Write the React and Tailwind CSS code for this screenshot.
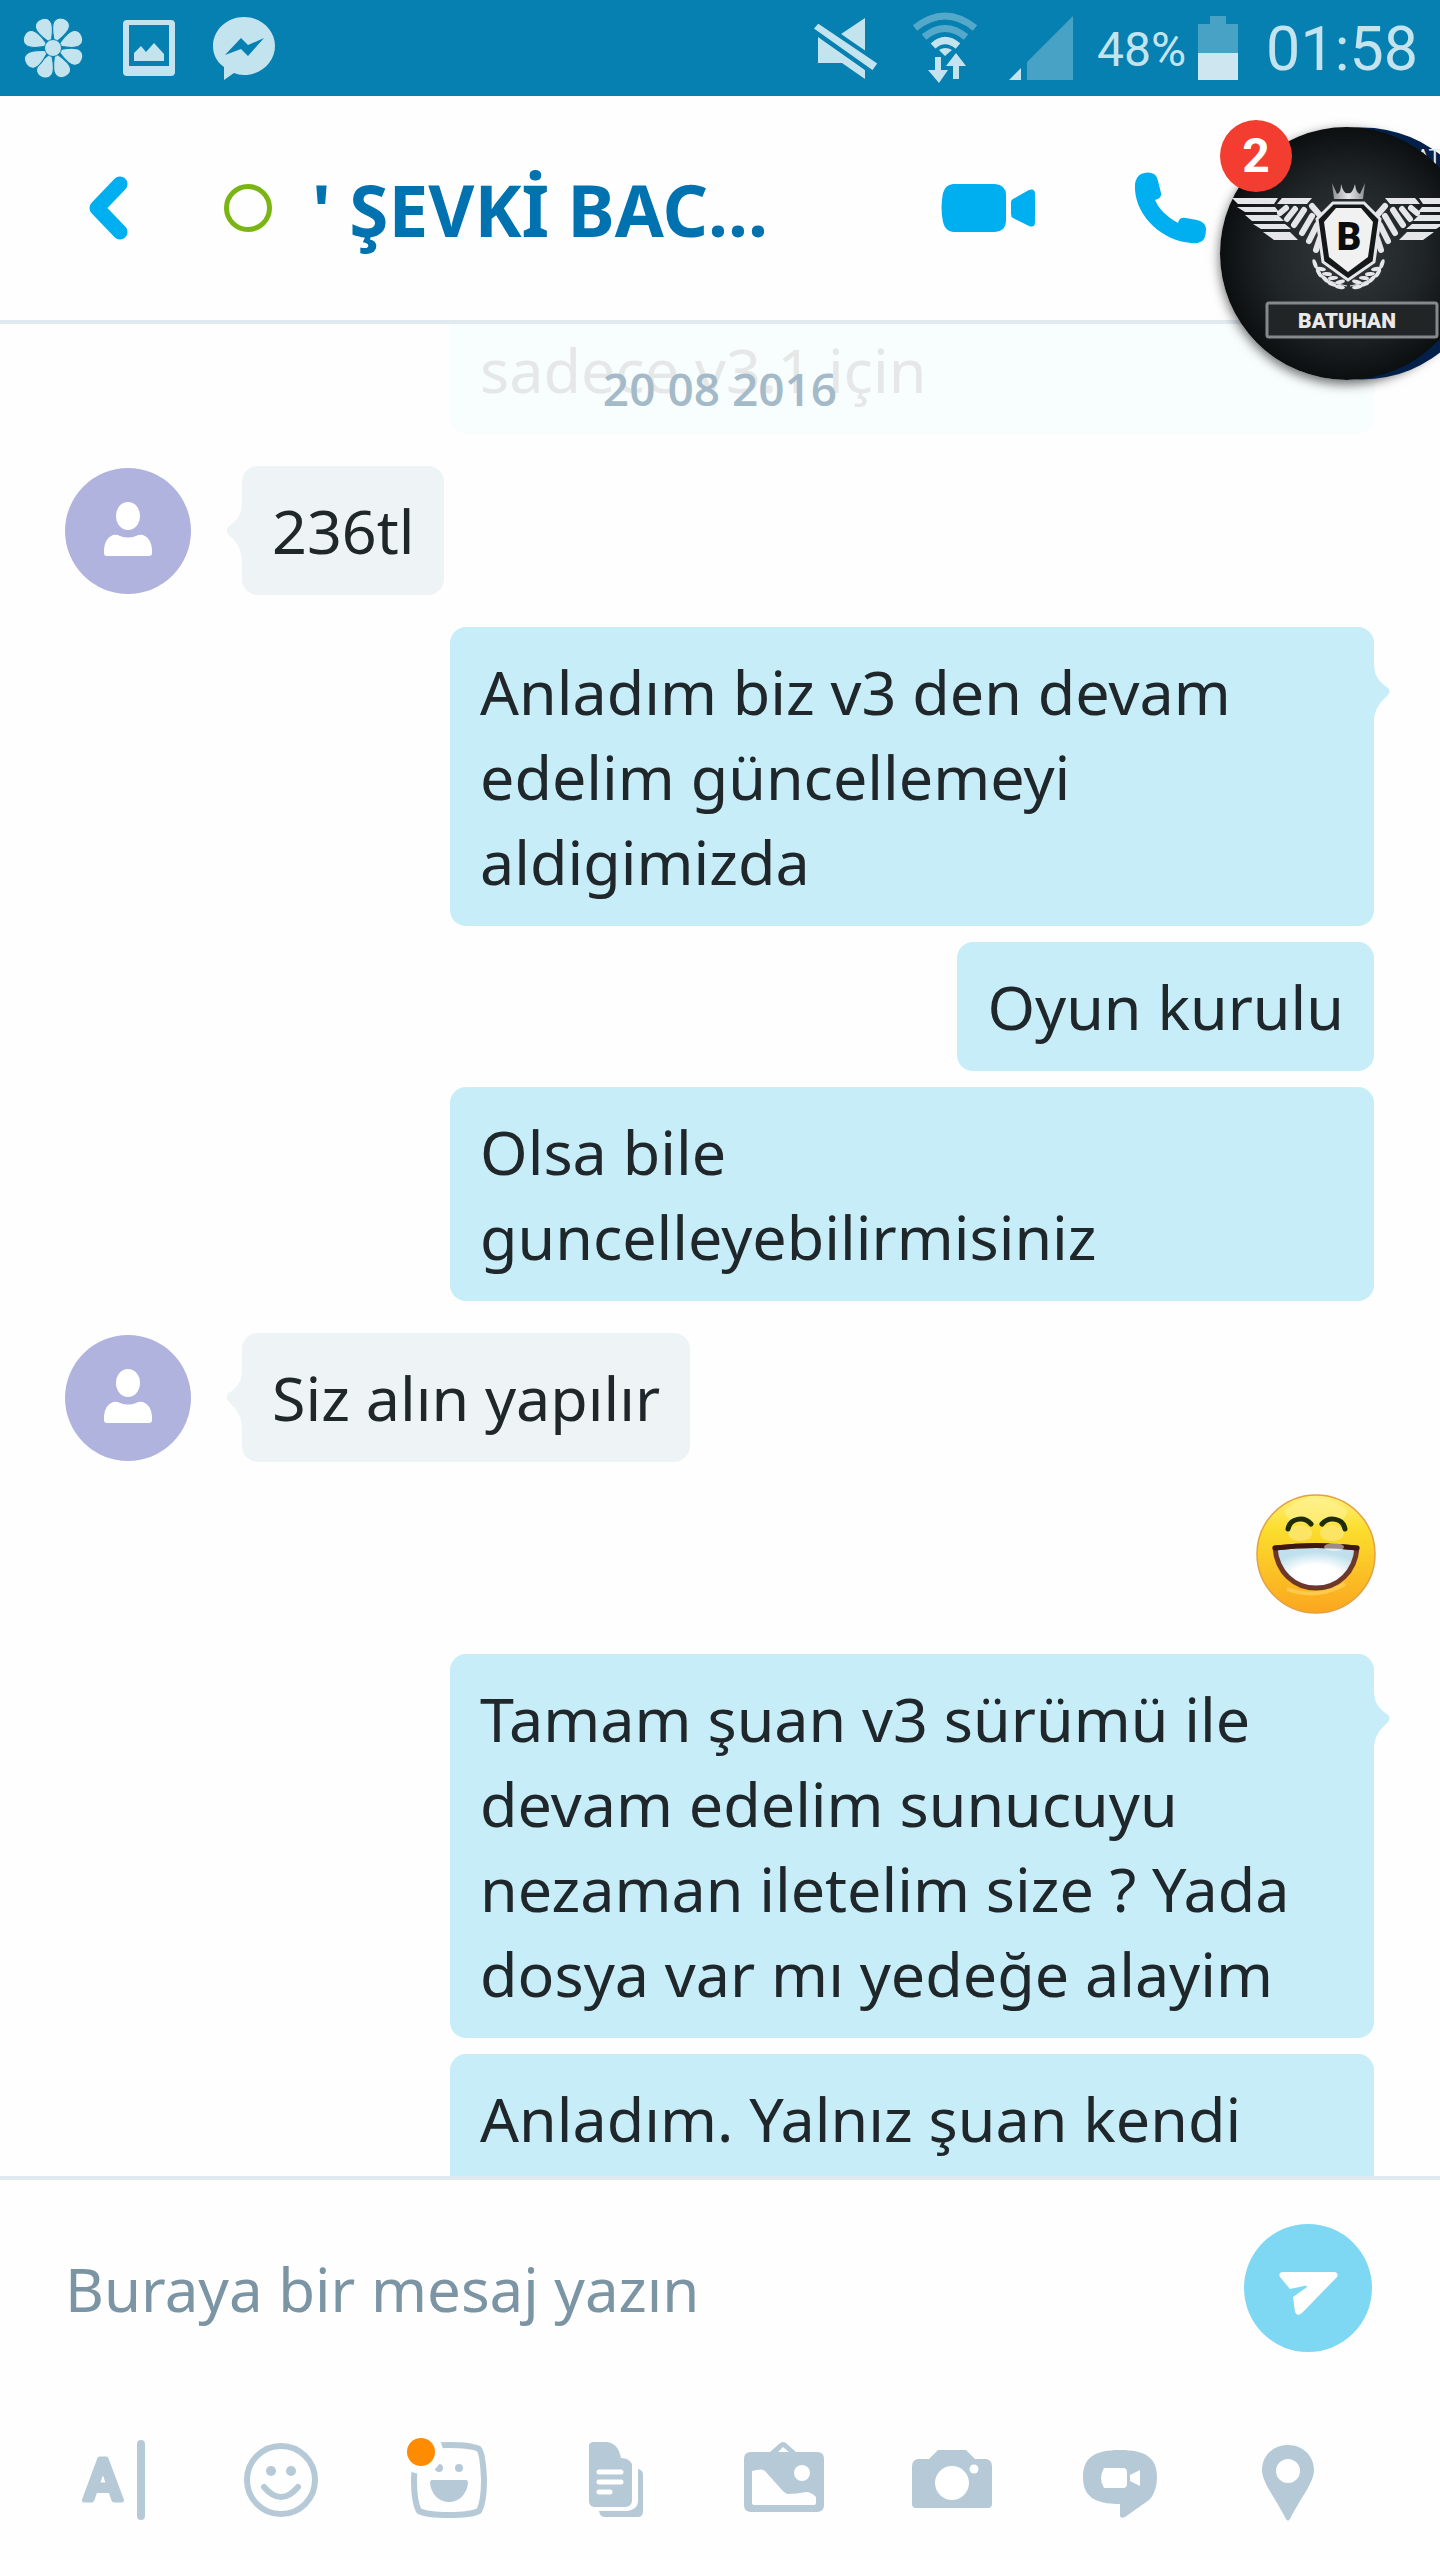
import { useState } from 'react';

// Messages of the conversation, grouped by who sent them
const conversation = [
    { from: 'contact', texts: ['236tl'] },
    { from: 'me', texts: ['Anladım biz v3 den devam edelim güncellemeyi aldigimizda', 'Oyun kurulu', 'Olsa bile guncelleyebilirmisiniz'] },
    { from: 'contact', texts: ['Siz alın yapılır'] },
    { from: 'me', emoji: true },
    { from: 'me', texts: ['Tamam şuan v3 sürümü ile devam edelim sunucuyu nezaman iletelim size ? Yada dosya var mı yedeğe alayim'] },
];

const petals = [20, 67, 112, 157, 200, 240, 293, 337];

function StatusBar() {
    return (
        <div className="flex h-24 shrink-0 items-center bg-[#0580b1] pl-[23px] pr-[22px] font-[Roboto,sans-serif] text-[#c3e3ee]">
            {/* Flower */}
            <svg className="h-16 w-[60px]" viewBox="0 0 60 64" fill="currentColor" stroke="#0580b1" strokeWidth="1">
                {petals.map((a) => (
                    <path key={a} transform={`rotate(${a} 30 32)`} d="M30 27C26 20 20 12 22 6C24 -1 36 -1 38 6C40 12 34 20 30 27Z" />
                ))}
                <circle cx="30" cy="32" r="8.500" />
            </svg>
            {/* Gallery */}
            <svg className="ml-10 h-14 w-[52px]" viewBox="0 0 52 56" fill="currentColor">
                <path fillRule="evenodd" d="M4 0H48Q52 0 52 4V52Q52 56 48 56H4Q0 56 0 52V4Q0 0 4 0ZM6 5V46H46V5Z" />
                <path d="M11 41V33L18 26L23 32L31 23L41 34V41Z" />
            </svg>
            {/* Messenger */}
            <svg className="ml-[38px] h-16 w-[62px]" viewBox="0 0 62 64">
                <path fill="currentColor" d="M31 1C48 1 62 14 62 30S48 59 31 59C27 59 24 58 21 57L11 64V51C4 46 0 39 0 30C0 14 14 1 31 1Z" />
                <path fill="#0580b1" d="M12 39L28 22L35 29L51 22L35 40L28 33Z" />
            </svg>

            {/* Muted speaker */}
            <svg className="ml-auto h-16 w-[66px]" viewBox="0 0 66 64" fill="currentColor">
                <path d="M53 2V36L29 18ZM6 21V47H30L53 63V54Z" />
                <path stroke="#0580b1" strokeWidth="4" d="M6 5L68 47L61 57L-1 13Z" />
            </svg>
            {/* Wifi */}
            <svg className="ml-[34px] h-[72px] w-[66px]" viewBox="0 0 66 72" fill="none" stroke="currentColor" strokeWidth="7">
                <path opacity=".42" d="M3 16Q33 -8 63 16M12 25Q33 8 54 25" />
                <path d="M21 34Q33 23 46 34" />
                <path fill="currentColor" stroke="none" d="M27 38Q33 34 40 38L33 44ZM23 45H29V58H36L27 71L16 58H23ZM41 67V54H34L44 41L54 54H47V67Z" />
            </svg>
            {/* Signal */}
            <svg className="ml-[31px] h-16 w-16" viewBox="0 0 64 64" fill="currentColor">
                <path d="M0 64L12 52V64Z" />
                <path opacity=".35" d="M18 64V46L64 0V64Z" />
            </svg>
            <span className="ml-6 pt-1 text-[48px]">48%</span>
            {/* Battery */}
            <svg className="ml-3 h-16 w-10" viewBox="0 0 40 64" fill="currentColor">
                <path opacity=".35" d="M12 0H28V8H40V37H0V8H12Z" />
                <path d="M0 37H40V64H0Z" fill="#cde6f0" />
            </svg>
            <span className="ml-7 pt-1 text-[61px]">01:58</span>
        </div>
    );
}

function Wing() {
    return (
        <g fill="#e4e6e7">
            <path d="M12 71H58L54 77H18ZM17 80H55L59 85H25ZM25 88H58L64 94H32ZM33 97H65L71 102H41ZM43 105H70L78 113H54Z" />
            <path d="M62 71H92L87 77H57Z" />
            <path fill="none" stroke="#e4e6e7" strokeWidth="6" strokeLinecap="round" d="M66 81L60 86M75 82L67 92M84 83L74 98M92 89L82 106M97 98L89 114M100 111L96 123M92 79L104 93" />
        </g>
    );
}

function Laurel() {
    return (
        <g fill="#e4e6e7">
            <path d="M94 134Q98 154 127 159" fill="none" stroke="#e4e6e7" strokeWidth="1" />
            {[[95, 137, 70], [101, 142, 10], [99, 146, 60], [107, 147, 5], [105, 152, 45], [113, 151, -5], [112, 157, 25], [120, 155, -15], [120, 160, 10]].map(([x, y, a]) => (
                <ellipse key={`${x}-${y}`} cx={x} cy={y} rx="5" ry="2" transform={`rotate(${a} ${x} ${y})`} />
            ))}
        </g>
    );
}

// Two stacked chat heads, the front one covers most of the navy one behind
function ChatHead() {
    return (
        <button aria-label="Batuhan" className="absolute -right-[33px] top-[127px] size-[253px] rounded-full shadow-[0_4px_12px_rgba(0,0,0,0.6)]">
            <svg className="size-full overflow-visible" viewBox="0 0 253 253">
                <defs>
                    <radialGradient id="leather" cx=".5" cy=".5" r=".5">
                        <stop offset="0" stopColor="#34393b" />
                        <stop offset=".6" stopColor="#202527" />
                        <stop offset="1" stopColor="#0c0f10" />
                    </radialGradient>
                    <linearGradient id="crown" x1="0" x2="1">
                        <stop offset="0" stopColor="#8c8f91" />
                        <stop offset=".5" stopColor="#e8e9ea" />
                        <stop offset="1" stopColor="#8c8f91" />
                    </linearGradient>
                </defs>
                <circle cx="142" cy="126.500" r="126" fill="#02204a" />
                <text x="196" y="37" fill="#e5e9ee" fontSize="21" fontFamily="Roboto, sans-serif">AT</text>
                <circle cx="126.500" cy="126.500" r="126.500" fill="url(#leather)" />
                <path fill="url(#crown)" d="M112 56L117 67Q121 66 121 57Q124 68 128 66Q132 68 135 57Q136 66 140 67L145 56L143 72H114Z" />
                <Wing />
                <g transform="translate(257 0) scale(-1 1)"><Wing /></g>
                <path d="M113 76H144L160 92L154 135L128 153L103 135L97 92Z" fill="#151819" stroke="#e4e6e7" strokeWidth="3" />
                <path d="M116 81H141L153 95L148 130L128 145L109 130L104 95Z" fill="#f1f1f1" />
                <text x="129" y="123" textAnchor="middle" fontSize="38" fontWeight="900" fontFamily="Roboto, sans-serif" fill="#0b0c0d">B</text>
                <Laurel />
                <g transform="translate(257 0) scale(-1 1)"><Laurel /></g>
                <rect x="47" y="176" width="170" height="34" rx="2" fill="#222526" stroke="#85898b" strokeWidth="3" />
                <text x="127" y="201" textAnchor="middle" fontSize="21" fontWeight="900" fontFamily="Roboto, sans-serif" fill="#e9e9e9">BATUHAN</text>
            </svg>
            <span className="absolute left-0 -top-[7px] flex size-[72px] items-center justify-center rounded-full bg-[#f33d30] font-[Roboto,sans-serif] text-[48px] font-bold text-white">2</span>
        </button>
    );
}

function Header() {
    return (
        <header className="flex h-[228px] shrink-0 items-center border-b-4 border-[#e1eaf0] pl-[88px] pr-[234px] text-[#00aff0]">
            <button aria-label="Geri">
                <svg className="h-16 w-10" viewBox="0 0 40 64" fill="none" stroke="currentColor" strokeWidth="15" strokeLinecap="round" strokeLinejoin="round">
                    <path d="M32 8L9 32L32 56" />
                </svg>
            </button>
            <span className="ml-24 size-12 rounded-full border-5 border-[#7ab513]"></span>
            <h1 className="ml-10 pt-1 text-[71px] font-bold text-[#0072b0]">' ŞEVKİ BAC...</h1>
            <button aria-label="Görüntülü arama" className="ml-auto">
                <svg className="h-12 w-[94px]" viewBox="0 0 94 48" fill="currentColor">
                    <path d="M12 0H54Q65 1 65 11V37Q65 47 54 48H12Q4 47 2 38Q-1 24 2 9Q4 1 12 0Z" />
                    <path d="M70 18Q70 16 72 15L88 6Q94 4 94 10V38Q94 44 88 42L72 34Q70 33 70 30Z" />
                </svg>
            </button>
            <button aria-label="Sesli arama" className="ml-[100px]">
                <svg className="h-[72px] w-[71px]" viewBox="0 0 71 72" fill="currentColor">
                    <path d="M6 2Q13 -1 19 2Q22 4 23 9L26 21Q27 26 20 28Q25 41 43 51Q44 45 51 46L62 48Q70 50 71 56Q71 63 69 67Q66 72 56 71C26 69 -2 42 0 12Q1 5 6 2Z" />
                </svg>
            </button>
        </header>
    );
}

function Avatar() {
    return (
        <span className="mr-[51px] size-[126px] shrink-0 rounded-full bg-[#b1b3df]">
            <svg viewBox="0 0 126 126" fill="white">
                <ellipse cx="63" cy="48" rx="12" ry="14" />
                <path d="M39 85V81Q40 70 48 67Q52 66 55 68Q63 71 71 68Q74 66 78 67Q86 70 87 81V85Q87 88 84 88H42Q39 88 39 85Z" />
            </svg>
        </span>
    );
}

function Bubble({ text, mine, tail }) {
    return (
        <p className={`relative max-w-[924px] rounded-2xl px-[30px] py-[22px] text-[61px] leading-[85px] text-[#20272b] ${mine ? 'bg-[#c6edf8]' : 'bg-[#eef3f6]'}`}>
            {text}
            {tail && (
                <svg className={`absolute top-9 h-[60px] w-4 ${mine ? 'left-full text-[#c6edf8]' : 'right-full -scale-x-100 text-[#eef3f6]'}`} viewBox="0 0 16 60" fill="currentColor">
                    <path d="M0 0C0 16 8 20 14 25Q17 28 14 32C8 38 0 44 0 60Z" />
                </svg>
            )}
        </p>
    );
}

function Laugh() {
    return (
        <svg role="img" aria-label="gülen yüz" className="-mr-0.5 mb-2 size-[120px]" viewBox="0 0 120 120">
            <defs>
                <linearGradient id="face" x1="0" y1="0" x2="0" y2="1">
                    <stop offset="0" stopColor="#fff07c" />
                    <stop offset=".3" stopColor="#fbdd2c" />
                    <stop offset="1" stopColor="#fba61f" />
                </linearGradient>
                <radialGradient id="teeth" cx=".5" cy=".75" r=".6">
                    <stop offset=".5" stopColor="#ffffff" />
                    <stop offset="1" stopColor="#bfe0ec" />
                </radialGradient>
            </defs>
            <circle cx="60" cy="60" r="59" fill="url(#face)" stroke="#e3a044" strokeWidth="1.500" />
            <path d="M29 16Q60 -8 91 16Q93 30 60 30Q27 30 29 16Z" fill="#fff6a8" opacity=".45" />
            <ellipse cx="44" cy="39" rx="12" ry="8" fill="#fdeb8b" opacity=".6" />
            <ellipse cx="76" cy="39" rx="12" ry="8" fill="#fdeb8b" opacity=".6" />
            <path d="M31 95Q60 106 89 90" fill="none" stroke="#fdd45a" strokeWidth="4" opacity=".7" />
            <path d="M32 35C34 24 48 22 55 30M66 30C73 22 87 24 89 35" fill="none" stroke="#1f2c06" strokeWidth="5" strokeLinecap="round" />
            <path d="M19 54Q60 49 101 54C99 78 82 94 60 94S21 78 19 54Z" fill="url(#teeth)" stroke="#6e3828" strokeWidth="5" strokeLinejoin="round" />
            <path d="M19 54Q60 49 101 54" fill="none" stroke="#3d1710" strokeWidth="5" strokeLinecap="round" />
            <ellipse cx="78" cy="53" rx="10" ry="4" fill="white" opacity=".5" />
        </svg>
    );
}

// Bottom row; every icon sits in the same 96px box
const tools = [
    { label: 'Metin', icon: <>
        <text x="38" y="68" textAnchor="middle" fontSize="57" fontWeight="500" fontFamily="Roboto, sans-serif" stroke="currentColor" strokeWidth="5" strokeLinejoin="round">A</text>
        <rect x="72" y="8" width="8" height="80" rx="4" />
    </> },
    { label: 'İfadeler', icon: <>
        <circle cx="48" cy="48" r="34" fill="none" stroke="currentColor" strokeWidth="6" />
        <circle cx="38" cy="39" r="5" />
        <circle cx="58" cy="39" r="5" />
        <path d="M31 55Q48 75 65 55" fill="none" stroke="currentColor" strokeWidth="6" strokeLinecap="round" />
    </> },
    { label: 'Moji', icon: <>
        <path d="M48 13Q70 13 78 17Q82 22 83 48Q83 70 78 79Q70 83 48 83T18 79Q13 70 13 48Q14 22 18 17Q26 13 48 13Z" fill="none" stroke="currentColor" strokeWidth="6" />
        <circle cx="38" cy="36" r="4" />
        <circle cx="58" cy="36" r="4" />
        <path d="M31 48H65Q67 48 67 51C66 62 58 70 48 70S30 62 29 51Q29 48 31 48Z" />
        <circle cx="20" cy="20" r="22" fill="white" />
        <circle cx="20" cy="20" r="14" fill="#ff8c00" />
    </> },
    { label: 'Dosya', icon: <>
        <path d="M25 10H38Q49 11 52 26Q60 26 63 32V68Q63 74 57 75H25Q20 74 20 69V14Q20 10 25 10Z" />
        <path d="M69 37Q74 38 74 43V79Q74 85 69 85H36Q31 85 30 79H58Q68 78 69 70Z" />
        <path d="M30 40H52M30 50H52M30 60H41" fill="none" stroke="white" strokeWidth="5" strokeLinecap="round" />
    </> },
    { label: 'Galeri', icon: <>
        <path fillRule="evenodd" d="M15 20H34L43 12Q47 8 51 12L60 20H81Q88 20 88 27V73Q88 80 81 80H15Q8 80 8 73V27Q8 20 15 20ZM42 20H53L47 15ZM16 39V71Q16 73 18 73H78Q80 73 80 71V65Q75 60 70 60Q60 62 52 62Q50 62 46 58L29 39Q26 36 16 39Z" />
        <circle cx="66" cy="41" r="8" fill="white" />
    </> },
    { label: 'Kamera', icon: <>
        <path d="M34 18H62L71 27H82Q88 28 88 34V72Q88 76 84 76H12Q8 76 8 72V34Q8 28 14 27H25Z" />
        <circle cx="48" cy="51" r="17" fill="white" />
        <circle cx="70" cy="37" r="4.500" fill="white" />
    </> },
    { label: 'Video mesajı', icon: <>
        <path d="M48 18C74 18 85 26 85 45Q85 60 77 68L53 85Q48 87 48 83V72C22 72 11 64 11 45S22 18 48 18Z" />
        <path d="M32 36H51Q55 36 55 40V52Q55 56 51 56H32Q26 46 32 36ZM58 43L68 38V54L58 49Z" fill="white" />
    </> },
    { label: 'Konum', icon: <path fillRule="evenodd" d="M48 13C63 13 74 24 74 38C74 50 62 64 50 87Q48 90 46 87C34 64 22 50 22 38C22 24 33 13 48 13ZM48 27A12 12 0 1 0 48 51A12 12 0 1 0 48 27Z" /> },
];

export default function App() {
    const [message, setMessage] = useState('');

    return (
        <div className="relative flex h-screen flex-col overflow-hidden bg-[#fefefe] font-['Noto_Sans',sans-serif]">
            <StatusBar />
            <Header />
            <main className="relative flex min-h-0 flex-1 flex-col gap-8 overflow-hidden pl-[65px] pr-[66px]">
                <p className="w-[924px] shrink-0 self-end rounded-b-2xl bg-[#f8fdfd] px-[30px] pb-[22px] pt-[3px] text-[61px] leading-[85px] text-[#e6e8e8]">sadece v3.1 için</p>
                <time className="absolute inset-x-0 top-8 text-center font-['Open_Sans',sans-serif] text-[46px] font-semibold leading-16 text-[#a5bac9]">20 08 2016</time>
                {conversation.map((group, i) => (
                    <div key={i} className={`flex shrink-0 ${group.from === 'me' ? 'flex-col items-end gap-4' : 'items-center'}`}>
                        {group.from === 'contact' && <Avatar />}
                        {group.emoji && <Laugh />}
                        {group.texts?.map((text, n) => (
                            <Bubble key={text} text={text} mine={group.from === 'me'} tail={n === 0} />
                        ))}
                    </div>
                ))}
                {/* runs on below the fold */}
                <p className="-mt-4 w-[924px] shrink-0 self-end rounded-t-2xl bg-[#c6edf8] px-[30px] py-[22px] text-[61px] leading-[85px] text-[#20272b]">Anladım. Yalnız şuan kendi</p>
            </main>
            <footer className="shrink-0 border-t-4 border-[#e1eaf0] bg-[#fefefe] pb-8 pt-11">
                <form className="flex items-center pl-[65px] pr-[68px]" onSubmit={(e) => e.preventDefault()}>
                    <input
                        className="min-w-0 flex-1 pt-0.5 text-[60px] text-[#20272b] outline-none placeholder:text-[#7b95a4]"
                        aria-label="Mesaj"
                        placeholder="Buraya bir mesaj yazın"
                        value={message}
                        onChange={(e) => setMessage(e.target.value)}
                    />
                    <button aria-label="Gönder" className="size-32 rounded-full bg-[#7ed7f3]">
                        <svg viewBox="0 0 128 128" fill="white">
                            <path d="M38 48H91Q95 49 93 53L58 89Q53 93 51 88L49 73L63 63Q64 61 60 62L46 65L36 53Q34 49 38 48Z" />
                        </svg>
                    </button>
                </form>
                <div className="mt-20 grid grid-cols-8 justify-items-center pl-[29px] pr-[68px] text-[#b6c9d7]">
                    {tools.map((tool) => (
                        <button key={tool.label} aria-label={tool.label}>
                            <svg className="size-24" viewBox="0 0 96 96" fill="currentColor">{tool.icon}</svg>
                        </button>
                    ))}
                </div>
            </footer>
            <ChatHead />
        </div>
    );
}
